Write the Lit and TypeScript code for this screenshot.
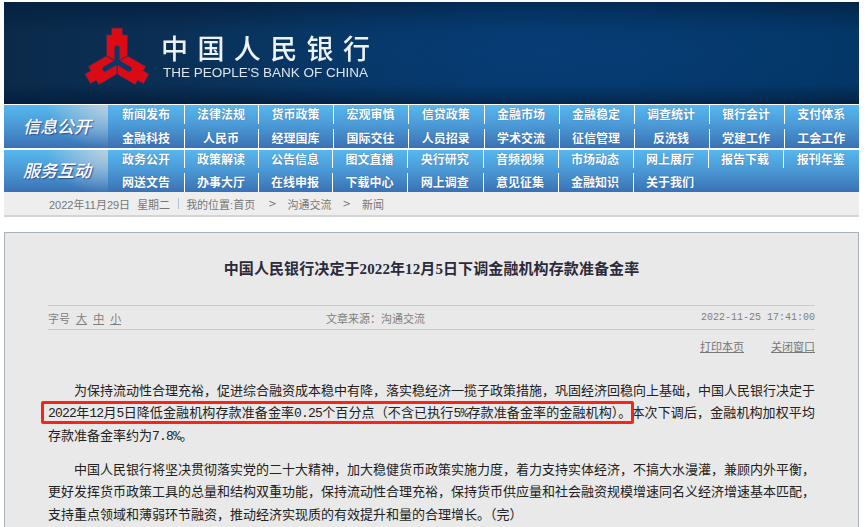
import { LitElement, html, css } from "lit";
import { customElement } from "lit/decorators.js";

const NAV = [
  {
    cls: "r1",
    title: "信息公开",
    items: ["新闻发布","法律法规","货币政策","宏观审慎","信贷政策","金融市场","金融稳定","调查统计","银行会计","支付体系",
            "金融科技","人民币","经理国库","国际交往","人员招录","学术交流","征信管理","反洗钱","党建工作","工会工作"],
  },
  {
    cls: "r2",
    title: "服务互动",
    items: ["政务公开","政策解读","公告信息","图文直播","央行研究","音频视频","市场动态","网上展厅","报告下载","报刊年鉴",
            "网送文告","办事大厅","在线申报","下载中心","网上调查","意见征集","金融知识","关于我们"],
  },
];

@customElement("app-root")
export class AppRoot extends LitElement {
  static styles = css`
    :host {
      display: block;
      height: 527px;
      overflow: hidden;
      background: #fff;
      font-family: "Liberation Sans", "Noto Sans CJK SC", sans-serif;
    }
    .page { width: 855px; padding: 2px 0 0 4px; }

    .banner {
      height: 102px;
      display: flex;
      align-items: flex-start;
      background:
        radial-gradient(ellipse 420px 70px at 560px 50px, rgba(6, 62, 120, .75), rgba(6, 62, 120, 0)),
        linear-gradient(180deg, rgba(2, 28, 58, .65) 0%, rgba(2, 28, 58, 0) 30%, rgba(2, 28, 58, 0) 80%, rgba(2, 28, 58, .8) 100%),
        linear-gradient(90deg, #0b2a4a 0%, #0a3158 25%, #05396c 60%, #033563 100%);
      color: #eef2f6;
    }
    .mark { width: 70px; height: 70px; margin: 24px 0 0 78px; flex: none; }
    .brand { margin: 29px 0 0 9px; }
    .cn {
      font-family: "Noto Sans CJK SC", sans-serif;
      font-size: 27px;
      font-weight: 500;
      line-height: 34px;
      letter-spacing: 9.4px;
      white-space: nowrap;
      filter: blur(.3px);
    }
    .en {
      margin-left: 2px;
      font-size: 13.5px;
      line-height: 15px;
      color: #dde4ea;
      white-space: nowrap;
      filter: blur(.2px);
    }

    .navrow {
      display: flex;
      margin-top: 1px;
      background: linear-gradient(180deg, #56b8ee 0%, #4a97d4 50%, #3a71b4 100%);
    }
    .navrow.r2 { margin-top: 2px; height: 42px; }
    .navrow.r1 { height: 43px; }
    .navtitle {
      width: 104px;
      flex: none;
      display: flex;
      align-items: center;
      justify-content: center;
      color: #fff;
      font-family: "Noto Sans CJK SC", sans-serif;
      font-size: 17px;
      font-style: italic;
      font-weight: 500;
      padding: 0 0 3px 2px;
      box-sizing: border-box;
      text-shadow: 1px 1px 1px rgba(40, 60, 130, .8);
      background: radial-gradient(ellipse 62px 44px at 100% 0%, rgba(205, 212, 220, .85), rgba(205, 212, 220, 0));
    }
    .cells {
      flex: 1;
      display: grid;
      align-content: start;
    }
    .r1 .cells {
      grid-template-columns: 76px 74px 75px 75px 75.5px 75px 75px 75px 75px 1fr;
      grid-template-rows: 19px 19px;
      row-gap: 5px;
    }
    .r2 .cells {
      grid-template-columns: 76px 74px 74px 75px 75.5px 75px 75px 75px 75px 1fr;
      grid-template-rows: 18px 19px;
      row-gap: 5px;
    }
    .cell {
      display: flex;
      align-items: center;
      justify-content: center;
      padding-bottom: 2px;
      box-sizing: border-box;
      color: #fff;
      font-family: "Noto Sans CJK SC", sans-serif;
      font-size: 12px;
      font-weight: 700;
      white-space: nowrap;
      text-shadow: 0 0 1px rgba(30, 60, 130, .7);
    }
    .cell.sep { box-shadow: inset 1px 0 0 #fff; }

    .crumb {
      height: 23px;
      border-bottom: 2px solid #d4d4d4;
      background: #eeeeee;
      display: flex;
      align-items: center;
      padding-left: 45px;
      font-size: 11px;
      color: #777;
      white-space: nowrap;
    }
    .crumb .week { margin-left: 7px; }
    .crumb .bar { margin: 0 7px 0 8px; width: 1px; height: 11px; background: #a9c3de; }
    .crumb .place { width: 71px; }
    .crumb .gt { margin: 0 11px; font-family: "DejaVu Sans", sans-serif; font-size: 10px; }

    .card {
      margin-top: 15px;
      box-sizing: border-box;
      height: 320px;
      width: 855px;
      border: 1px solid #a9b1bc;
      border-bottom: 0;
      background: #e9e9e9;
      padding: 0 43px;
    }
    .title {
      margin: 24px 0 0;
      height: 24px;
      line-height: 24px;
      text-align: center;
      font-family: "Liberation Serif", "Noto Sans CJK SC", serif;
      font-size: 15px;
      font-weight: 700;
      letter-spacing: .1px;
      color: #2a2a3a;
      white-space: nowrap;
    }
    .meta {
      margin-top: 24px;
      height: 23px;
      border-top: 1px solid #c9c9c9;
      border-bottom: 1px solid #c9c9c9;
      display: grid;
      grid-template-columns: 278px auto 1fr;
      align-items: center;
      font-size: 11px;
      color: #808080;
    }
    .meta a { color: #808080; text-decoration: underline; margin-left: 3px; }
    .meta .time {
      text-align: right;
      font-family: "Liberation Mono", monospace;
      font-size: 10px;
    }
    .tools {
      margin-top: 9px;
      display: flex;
      justify-content: flex-end;
      gap: 27px;
      font-size: 11px;
      line-height: 17px;
      color: #777;
    }
    .tools a { color: #777; text-decoration: underline; }

    .article {
      position: relative;
      margin-top: 23px;
      font-family: "Noto Sans CJK SC", sans-serif;
      font-size: 13px;
      line-height: 22.4px;
      color: #222;
    }
    .article p { margin: 0 0 11.5px; text-indent: 2em; text-align: justify; }
    .n {
      font-family: "Liberation Mono", monospace;
      font-size: 13px;
      letter-spacing: -.8px;
      line-height: 1;
    }
    .flag {
      position: absolute;
      left: -7px;
      top: 22px;
      width: 593px;
      height: 23px;
      box-sizing: border-box;
      border: 3px solid #f6251a;
      border-radius: 2px;
    }
  `;

  render() {
    return html`
      <div class="page">
        <header class="banner">
          <svg class="mark" viewBox="-35 -36 70 70" aria-hidden="true">
            <defs>
              <polygon id="arm" points="-5.7,-34 5.7,-34 5.7,-27.3 10.7,-27.3 10.7,-6.2 0,0 -10.7,-6.2 -10.7,-27.3 -5.7,-27.3"></polygon>
            </defs>
            <g fill="#dc0a14" stroke="#0a3868" stroke-width=".7" stroke-linejoin="miter">
              <use href="#arm"></use>
              <use href="#arm" transform="rotate(120)"></use>
              <use href="#arm" transform="rotate(240)"></use>
            </g>
            <g stroke="#0a3868" stroke-width="5" stroke-linecap="round" fill="none">
              <path d="M0 0V-14"></path>
              <path d="M0 0L12.1 7"></path>
              <path d="M0 0L-12.1 7"></path>
            </g>
          </svg>
          <div class="brand">
            <div class="cn">中国人民银行</div>
            <div class="en">THE PEOPLE'S BANK OF CHINA</div>
          </div>
        </header>

        ${NAV.map(
          (row) => html`
            <nav class="navrow ${row.cls}">
              <div class="navtitle">${row.title}</div>
              <div class="cells">
                ${row.items.map(
                  (t, i) => html`<div class="cell ${i % 10 === 0 ? "" : "sep"}">${t}</div>`
                )}
              </div>
            </nav>
          `
        )}

        <div class="crumb">
          <span>2022年11月29日</span>
          <span class="week">星期二</span>
          <span class="bar"></span>
          <span class="place">我的位置:首页</span>
          <span class="gt">&gt;</span>
          <span>沟通交流</span>
          <span class="gt">&gt;</span>
          <span>新闻</span>
        </div>

        <main class="card">
          <h1 class="title">中国人民银行决定于2022年12月5日下调金融机构存款准备金率</h1>
          <div class="meta">
            <div>字号 <a>大</a> <a>中</a> <a>小</a></div>
            <div>文章来源：沟通交流</div>
            <div class="time">2022-11-25 17:41:00</div>
          </div>
          <div class="tools"><a>打印本页</a><a>关闭窗口</a></div>
          <article class="article">
            <p>为保持流动性合理充裕，促进综合融资成本稳中有降，落实稳经济一揽子政策措施，巩固经济回稳向上基础，中国人民银行决定于<span class="n">2022</span>年<span class="n">12</span>月<span class="n">5</span>日降低金融机构存款准备金率<span class="n">0.25</span>个百分点（不含已执行<span class="n">5%</span>存款准备金率的金融机构）。本次下调后，金融机构加权平均存款准备金率约为<span class="n">7.8%</span>。</p>
            <p>中国人民银行将坚决贯彻落实党的二十大精神，加大稳健货币政策实施力度，着力支持实体经济，不搞大水漫灌，兼顾内外平衡，更好发挥货币政策工具的总量和结构双重功能，保持流动性合理充裕，保持货币供应量和社会融资规模增速同名义经济增速基本匹配，支持重点领域和薄弱环节融资，推动经济实现质的有效提升和量的合理增长。（完）</p>
            <div class="flag"></div>
          </article>
        </main>
      </div>
    `;
  }
}
